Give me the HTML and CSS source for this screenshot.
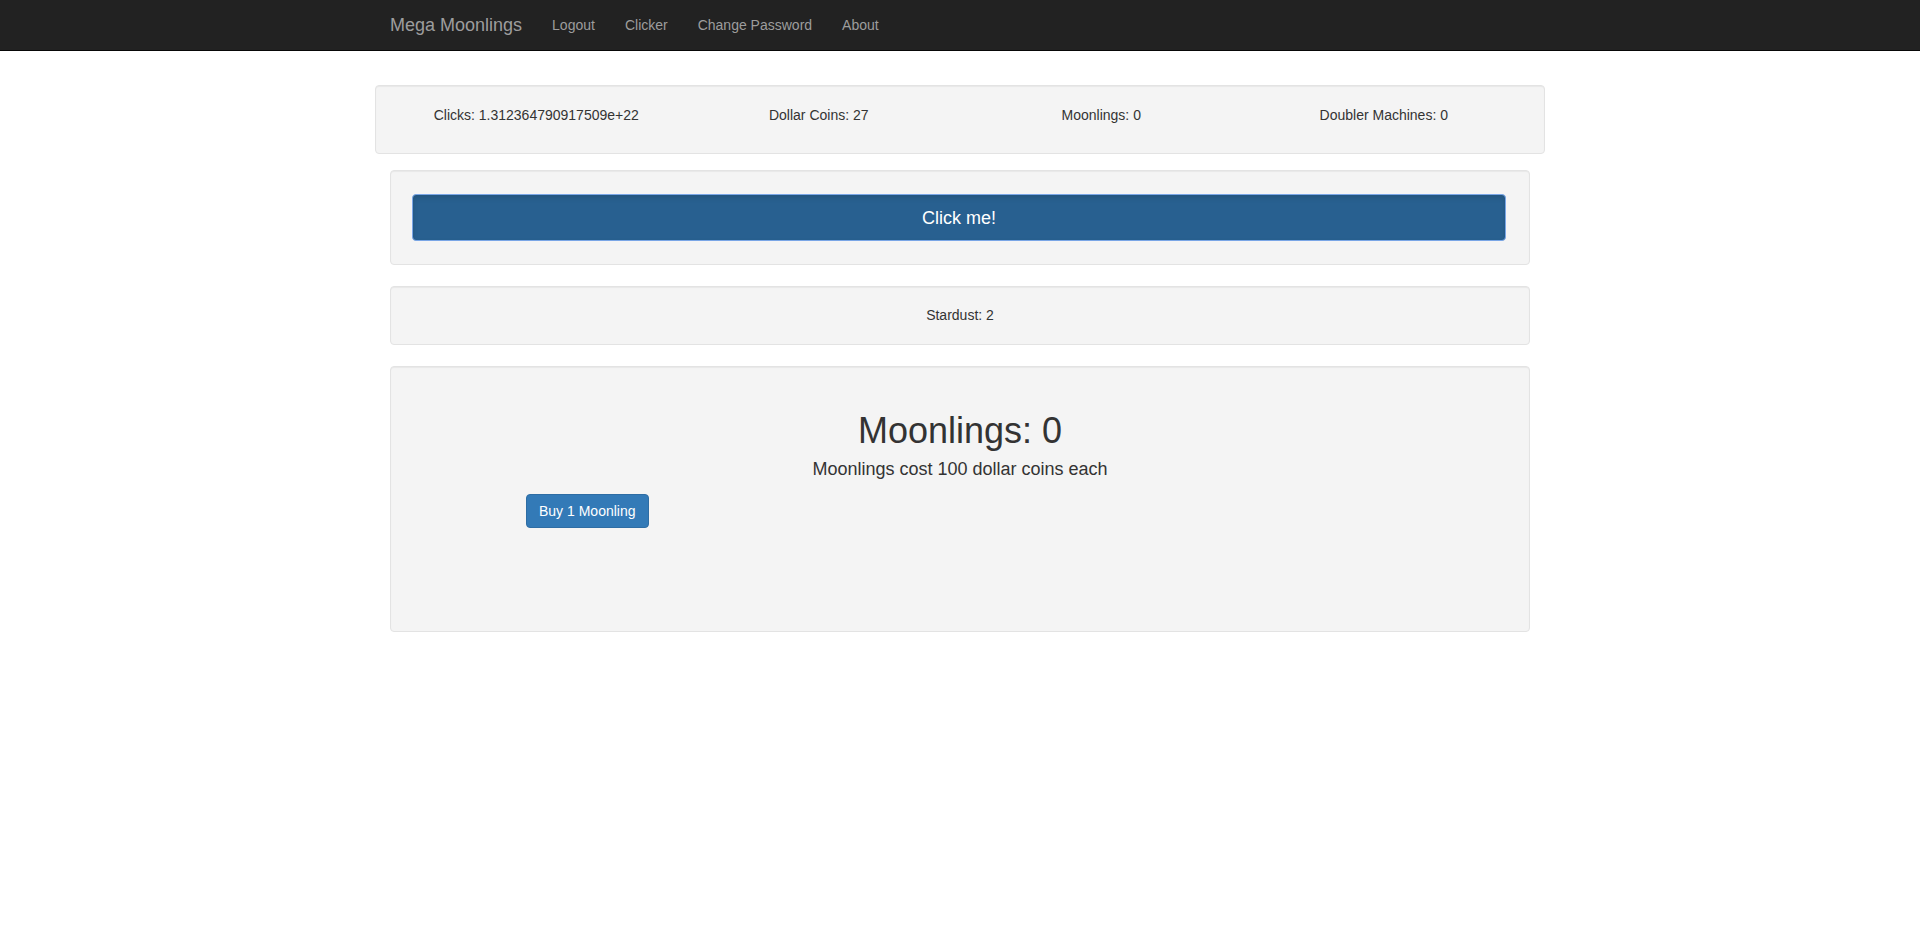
FILE: index.html
```html
<!DOCTYPE html>
<html>
<head>
<meta charset="utf-8">
<title>Mega Moonlings</title>
<link rel="stylesheet" href="styles.css">
</head>
<body>
<nav class="navbar">
  <div class="container nav-inner">
    <a class="brand" href="#">Mega Moonlings</a>
    <ul class="nav">
      <li><a href="#">Logout</a></li>
      <li><a href="#">Clicker</a></li>
      <li><a href="#">Change Password</a></li>
      <li><a href="#">About</a></li>
    </ul>
  </div>
</nav>
<main class="container">
  <div class="well stats">
    <div class="stat">Clicks: 1.312364790917509e+22</div>
    <div class="stat">Dollar Coins: 27</div>
    <div class="stat">Moonlings: 0</div>
    <div class="stat">Doubler Machines: 0</div>
  </div>
  <div class="well click-well">
    <button class="btn-click">Click me!</button>
  </div>
  <div class="well stardust">Stardust: 2</div>
  <div class="well shop">
    <h1 class="shop-title">Moonlings: 0</h1>
    <p class="shop-sub">Moonlings cost 100 dollar coins each</p>
    <button class="btn-buy">Buy 1 Moonling</button>
  </div>
</main>
</body>
</html>
```

FILE: styles.css
```css
* { box-sizing: border-box; }
body {
  margin: 0;
  font-family: "Liberation Sans", Arial, Helvetica, sans-serif;
  font-size: 14px;
  line-height: 20px;
  color: #333;
  background: #fff;
}
.container {
  width: 1170px;
  margin: 0 auto;
  padding: 0 15px;
}
.navbar {
  background: #222;
  border-bottom: 1px solid #080808;
  height: 51px;
}
.nav-inner {
  display: flex;
  align-items: stretch;
  height: 50px;
}
.brand {
  color: #9d9d9d;
  text-decoration: none;
  font-size: 18px;
  line-height: 20px;
  padding: 15px 15px;
  margin-left: -15px;
  height: 50px;
}
.nav {
  list-style: none;
  margin: 0;
  padding: 0;
  display: flex;
}
.nav a {
  display: block;
  color: #9d9d9d;
  text-decoration: none;
  padding: 15px 15px;
  line-height: 20px;
}
.well {
  background: #f4f4f4;
  border: 1px solid #e3e3e3;
  border-radius: 4px;
  box-shadow: inset 0 1px 1px rgba(0,0,0,.05);
}
.stats {
  margin: 34px -15px 16px;
  padding: 19px 19px 28px;
  display: grid;
  grid-template-columns: repeat(4, 1fr);
  text-align: center;
}
.click-well {
  padding: 23px 23px 23px 21px;
  margin-bottom: 21px;
}
.btn-click {
  display: block;
  width: 100%;
  height: 47px;
  background: #286090;
  color: #fff;
  font-family: inherit;
  font-size: 18px;
  line-height: 24px;
  border: 1px solid #7aa6e6;
  border-radius: 4px;
  box-shadow: inset 0 3px 5px rgba(0,0,0,.125);
  padding: 10px 16px;
}
.stardust {
  padding: 18px 19px 19px;
  text-align: center;
  margin-bottom: 21px;
}
.shop {
  padding: 19px;
  min-height: 266px;
  text-align: center;
}
.shop-title {
  font-size: 36px;
  font-weight: 500;
  line-height: 40px;
  margin: 25px 0 0;
}
.shop-sub {
  font-size: 18px;
  line-height: 24px;
  margin: 6px 0 0;
}
.btn-buy {
  display: block;
  margin: 13px 0 0 116px;
  height: 34px;
  padding: 6px 12px;
  font-family: inherit;
  font-size: 14px;
  line-height: 20px;
  color: #fff;
  background: #337ab7;
  border: 1px solid #2e6da4;
  border-radius: 4px;
}
```
